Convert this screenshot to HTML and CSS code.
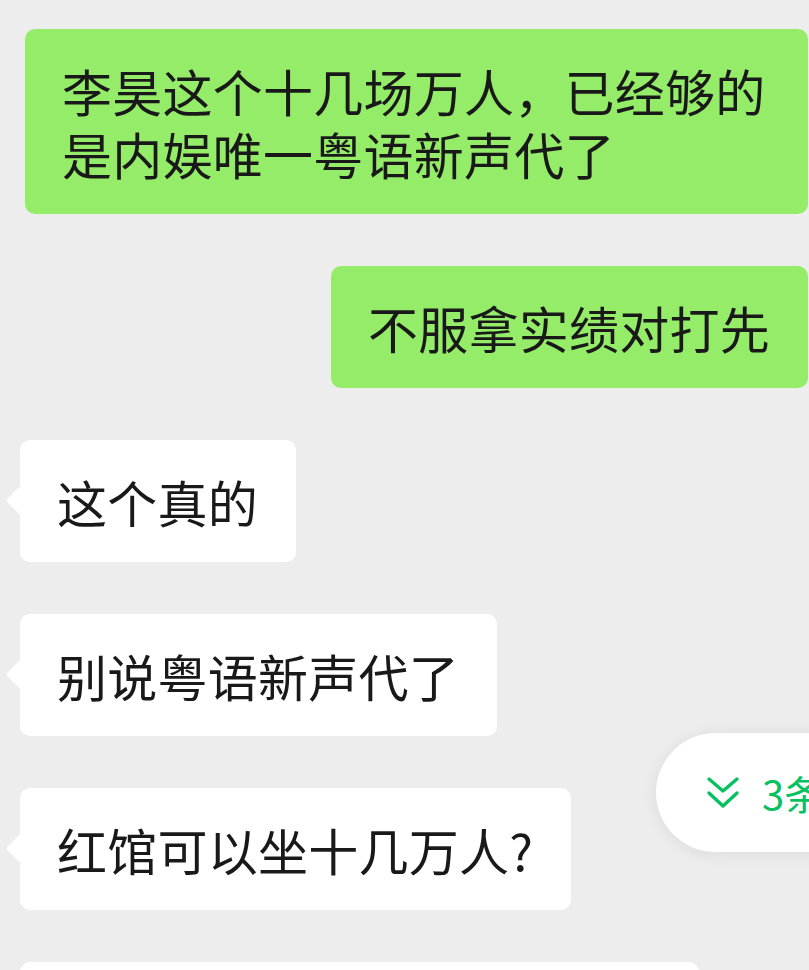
FILE: index.html
```html
<!DOCTYPE html>
<html lang="zh-CN">
<head>
    <meta charset="UTF-8" />
    <title>聊天</title>
    <link rel="stylesheet" href="styles.css">
</head>
<body>
    <main class="chat">
        <div class="row row-mine">
            <div class="bubble bubble-mine">李昊这个十几场万人，已经够的是内娱唯一粤语新声代了</div>
        </div>
        <div class="row row-mine">
            <div class="bubble bubble-mine">不服拿实绩对打先</div>
        </div>
        <div class="row row-other">
            <div class="bubble bubble-other">这个真的</div>
        </div>
        <div class="row row-other">
            <div class="bubble bubble-other">别说粤语新声代了</div>
        </div>
        <div class="row row-other">
            <div class="bubble bubble-other">红馆可以坐十几万人?</div>
        </div>
        <div class="row row-other">
            <div class="bubble bubble-other bubble-cut"></div>
        </div>
    </main>

    <!-- 新消息提示 -->
    <div class="new-msg">
        <svg class="new-msg-icon" viewBox="0 0 34 34" width="34" height="34">
            <path d="M3 3 L17 15 L31 3" fill="none" stroke="#07c160" stroke-width="3.4" stroke-linecap="round" stroke-linejoin="round"/>
            <path d="M3 17 L17 30 L31 17" fill="none" stroke="#07c160" stroke-width="3.4" stroke-linecap="round" stroke-linejoin="round"/>
        </svg>
        <span class="new-msg-text">3条新消息</span>
    </div>
</body>
</html>
```

FILE: styles.css
```css
* {
    box-sizing: border-box;
}

body {
    margin: 0;
    background: #ededed;
    font-family: "Noto Sans CJK SC", "Noto Sans", sans-serif;
    color: #191919;
    overflow: hidden;
    height: 970px;
}

.chat {
    display: flex;
    flex-direction: column;
    gap: 52px;
    padding-top: 29px;
}

.row {
    display: flex;
}

.row-mine {
    justify-content: flex-end;
    padding-right: 1px;
}

.row-other {
    justify-content: flex-start;
    padding-left: 20px;
}

.bubble {
    position: relative;
    max-width: 783px;
    padding: 30px 38px 29px 37px;
    border-radius: 10px;
    font-size: 50px;
    line-height: 63px;
    letter-spacing: 0.25px;
}

.bubble-mine {
    background: #95ec69;
}

.bubble-other {
    background: #fff;
}

/* 左侧小尖角 */
.bubble-other::before {
    content: "";
    position: absolute;
    left: -10px;
    top: 50px;
    width: 21px;
    height: 21px;
    background: #fff;
    border-radius: 3px;
    transform: rotate(45deg);
}

.bubble-cut {
    width: 679px;
    height: 122px;
}

.new-msg {
    position: absolute;
    left: 656px;
    top: 733px;
    width: 220px;
    height: 119px;
    border-radius: 60px;
    background: #fff;
    box-shadow: 0 2px 18px rgba(0, 0, 0, 0.08);
    display: flex;
    align-items: center;
    padding-left: 50px;
    gap: 22px;
}

.new-msg-icon {
    flex-shrink: 0;
}

.new-msg-text {
    color: #07c160;
    font-size: 40px;
    white-space: nowrap;
}
```
